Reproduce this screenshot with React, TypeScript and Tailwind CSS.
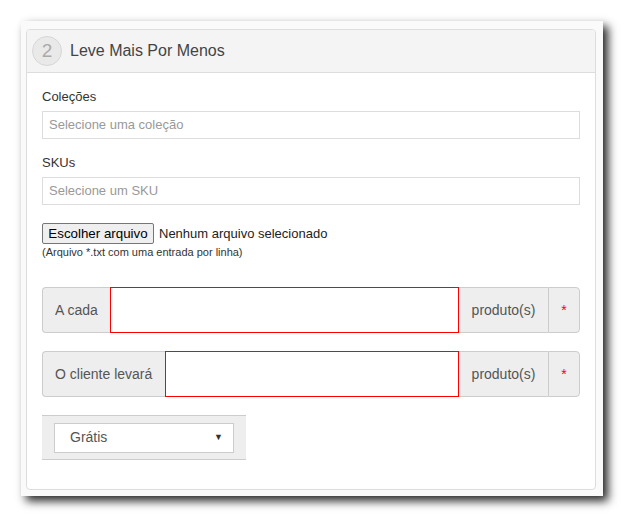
import React from "react";

export default function App() {
  return (
    <div className="min-h-[517px] bg-white pt-[21px] pl-[21px] font-['Liberation_Sans',Arial,sans-serif]">
      <div className="w-[582px] h-[475px] bg-[#fafafa] pt-[8px] pl-[5px] pr-[7px] pb-[6px] shadow-[5px_5px_9px_rgba(0,0,0,0.85)]">
        <div className="w-[570px] h-[461px] bg-white border border-[#dddddd] rounded-[4px] overflow-hidden">
          {/* header */}
          <div className="h-[43px] bg-[#f4f4f4] border-b border-[#dddddd] flex items-center pl-[5px]">
            <div className="w-[30px] h-[30px] rounded-full bg-[#e9e9e9] border border-[#d6d6d6] flex items-center justify-center text-[19px] text-[#aaaaaa]">
              2
            </div>
            <div className="ml-[8px] text-[16px] text-[#444444]">Leve Mais Por Menos</div>
          </div>
          {/* body */}
          <div className="px-[15px] pt-[15px]">
            <div className="text-[13px] leading-[18px] text-[#333333]">Coleções</div>
            <div className="mt-[5px] h-[28px] border border-[#dddddd] flex items-center pl-[6px] text-[13px] text-[#999999]">
              Selecione uma coleção
            </div>
            <div className="mt-[15px] text-[13px] leading-[18px] text-[#333333]">SKUs</div>
            <div className="mt-[5px] h-[28px] border border-[#dddddd] flex items-center pl-[6px] text-[13px] text-[#999999]">
              Selecione um SKU
            </div>
            <div className="mt-[18px] flex items-center h-[21px]">
              <div className="h-[21px] w-[112px] border border-[#767676] bg-[#efefef] rounded-[2px] flex items-center justify-center text-[13.33px] text-black">
                Escolher arquivo
              </div>
              <div className="ml-[5px] text-[13px] text-[#222222]">Nenhum arquivo selecionado</div>
            </div>
            <div className="mt-[1px] text-[11px] leading-[15px] text-[#333333]">(Arquivo *.txt com uma entrada por linha)</div>

            <div className="mt-[27px] flex h-[46px] text-[14px] text-[#555555]">
              <div className="w-[68px] bg-[#eeeeee] border border-[#cccccc] border-r-0 rounded-l-[4px] flex items-center pl-[12px]">A cada</div>
              <div className="w-[349px] border border-[#ff0000] bg-white"></div>
              <div className="w-[89px] bg-[#eeeeee] border-y border-[#cccccc] flex items-center justify-center">produto(s)</div>
              <div className="w-[32px] bg-[#eeeeee] border border-[#cccccc] rounded-r-[4px] flex items-center justify-center text-[#ff0000]">*</div>
            </div>

            <div className="mt-[18px] flex h-[46px] text-[14px] text-[#555555]">
              <div className="w-[123px] bg-[#eeeeee] border border-[#cccccc] border-r-0 rounded-l-[4px] flex items-center pl-[12px]">O cliente levará</div>
              <div className="w-[294px] border border-[#ff0000] bg-white"></div>
              <div className="w-[89px] bg-[#eeeeee] border-y border-[#cccccc] flex items-center justify-center">produto(s)</div>
              <div className="w-[32px] bg-[#eeeeee] border border-[#cccccc] rounded-r-[4px] flex items-center justify-center text-[#ff0000]">*</div>
            </div>

            <div className="mt-[18px] w-[204px] h-[45px] bg-[#eeeeee] border-y border-[#cccccc] flex items-center px-[12px]">
              <div className="w-[180px] h-[30px] bg-white border border-[#cccccc] flex items-center pl-[15px] pr-[10px] text-[14px] text-[#555555]">
                <span className="flex-1">Grátis</span>
                <span className="text-[9px] text-[#333333]">▼</span>
              </div>
            </div>
          </div>
        </div>
      </div>
    </div>
  );
}
